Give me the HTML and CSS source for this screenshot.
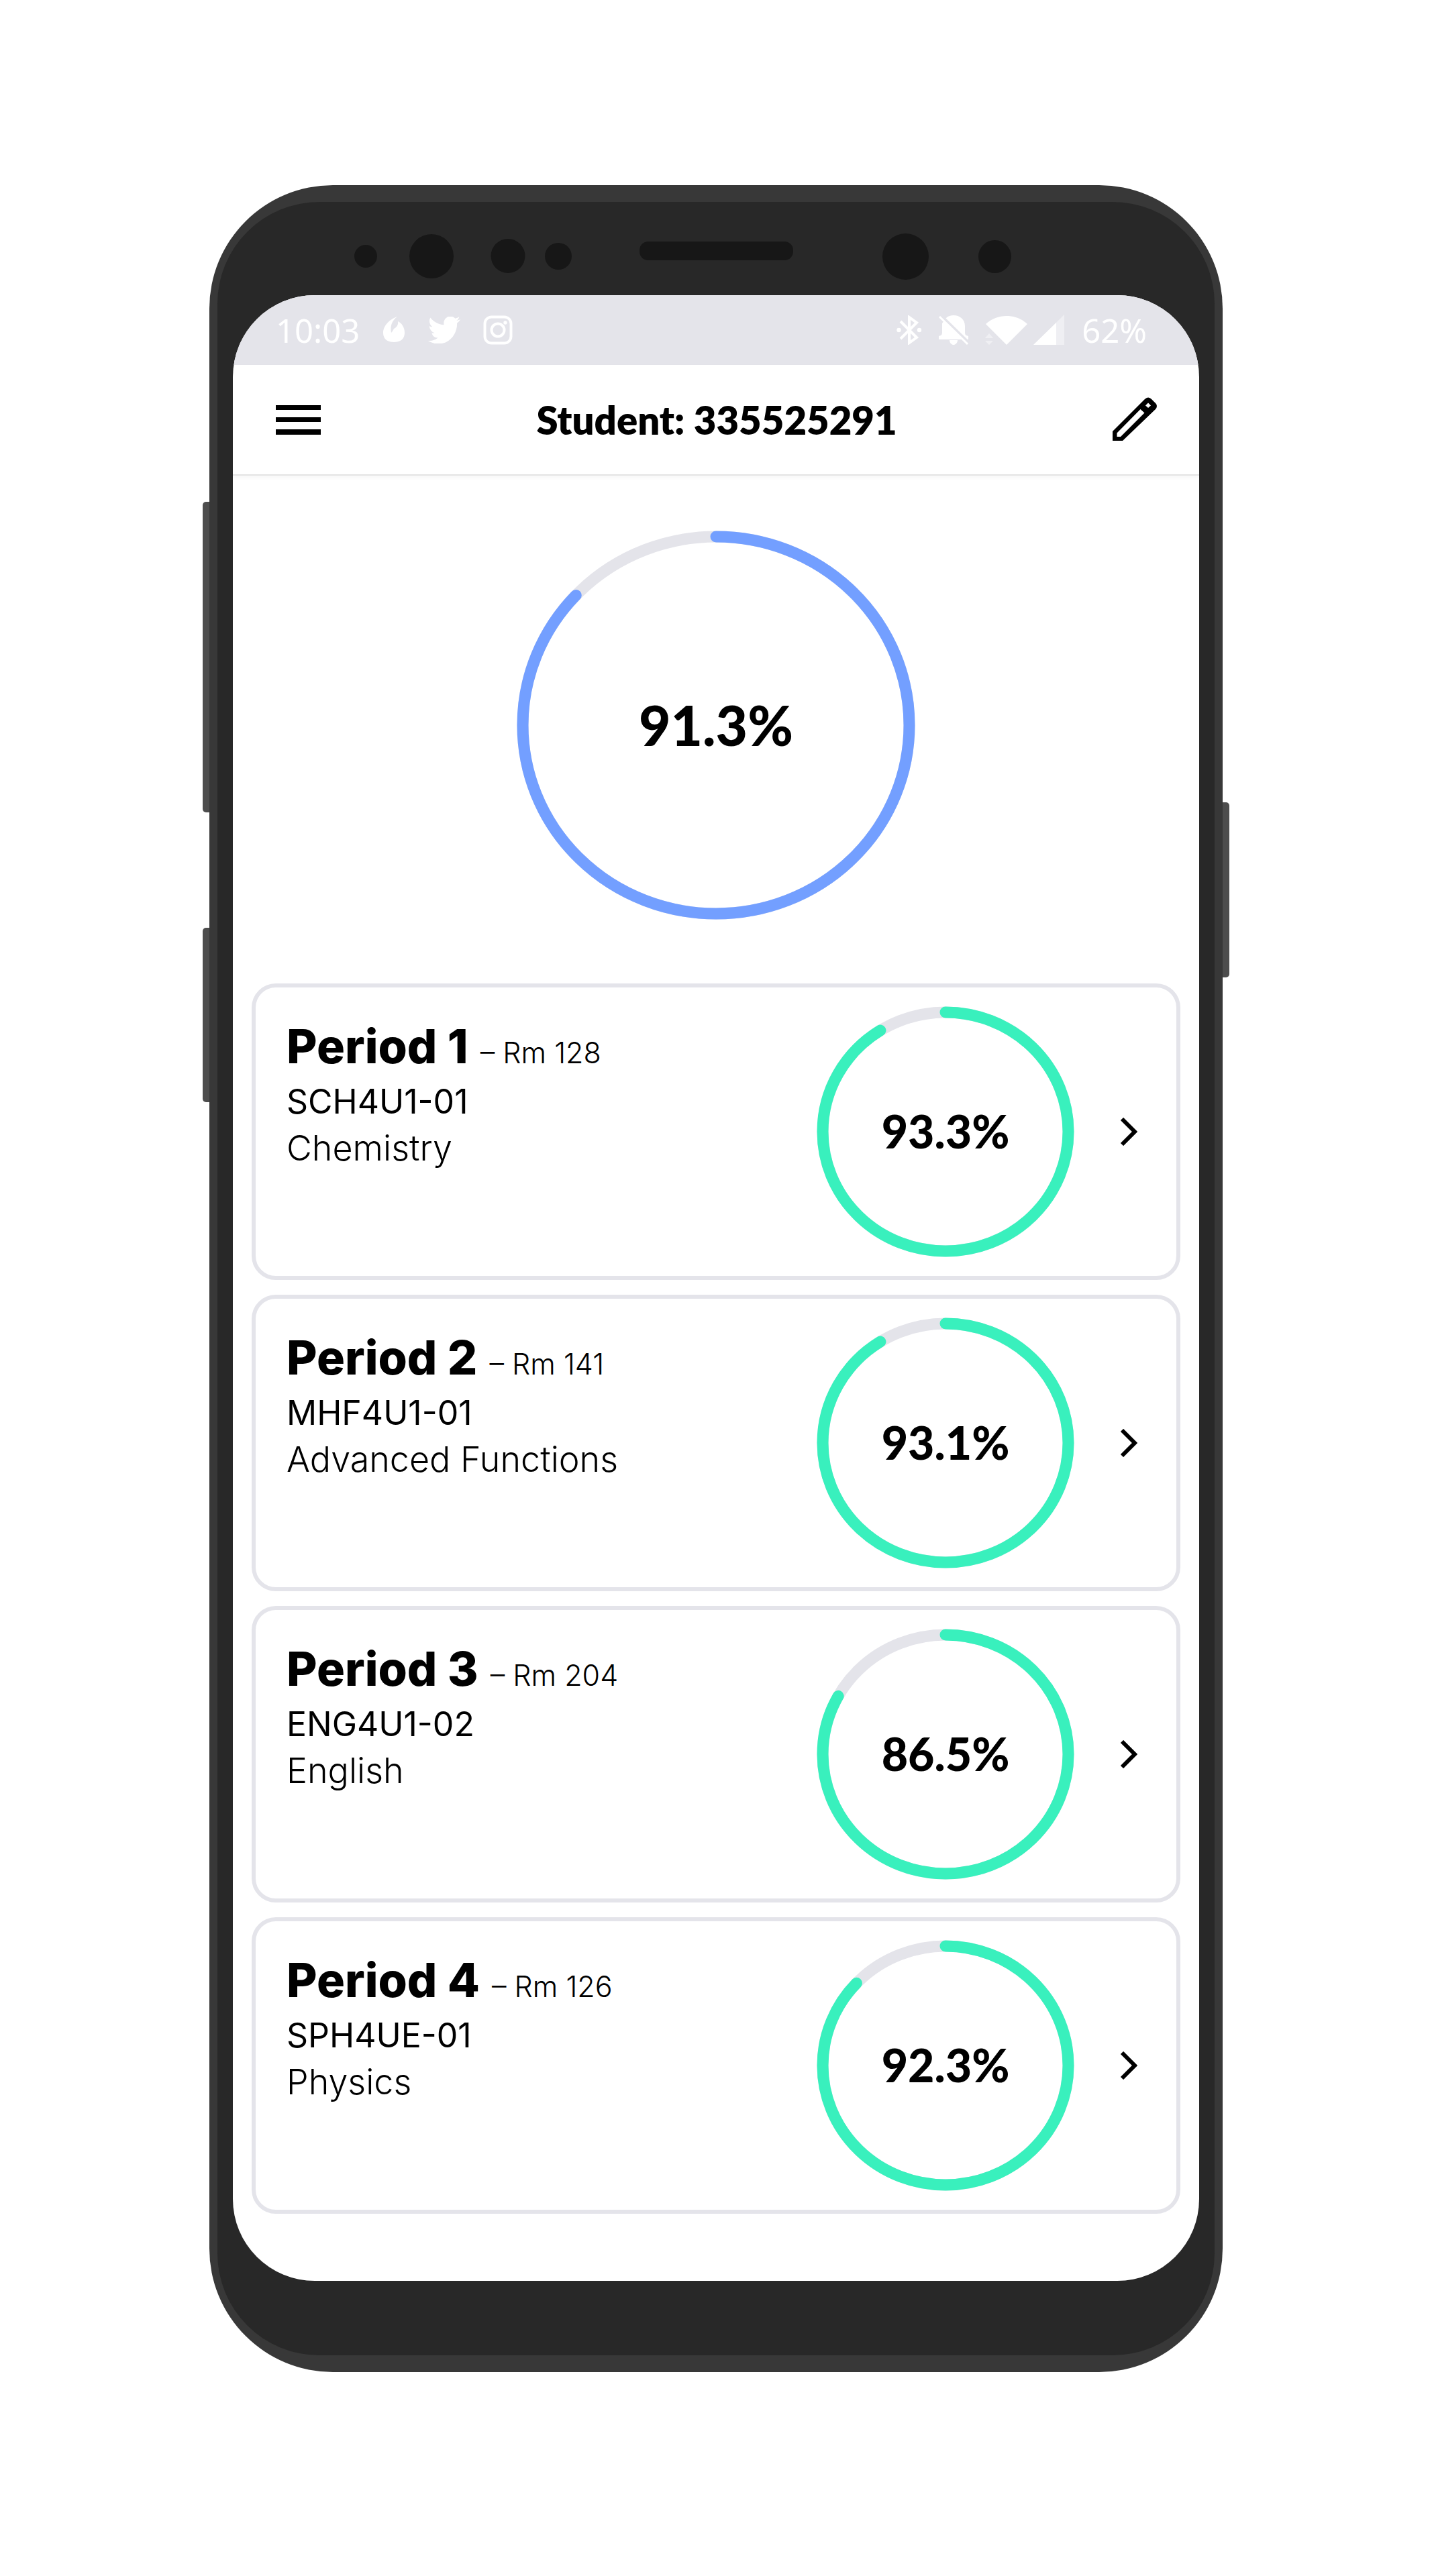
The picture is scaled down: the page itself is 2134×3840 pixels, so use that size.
FILE: index.html
```html
<!DOCTYPE html>
<html lang="en">
<head>
<meta charset="utf-8">
<meta name="viewport" content="width=device-width, initial-scale=1">
<title>Student marks</title>
<link rel="stylesheet" href="styles.css">
</head>
<body>
<div class="phone">
  <span class="side-key volume"></span>
  <span class="side-key assistant"></span>
  <span class="side-key power"></span>
  <div class="body">
    <svg class="sensors" viewBox="0 0 1440 139" aria-hidden="true">
      <circle cx="198" cy="81" r="17"/>
      <circle cx="296" cy="81" r="33"/>
      <circle cx="410" cy="80.500" r="25.500"/>
      <circle cx="485" cy="81" r="20"/>
      <rect x="606" y="59" width="229" height="28" rx="13"/>
      <circle cx="1002.500" cy="81.500" r="34.500"/>
      <circle cx="1135.500" cy="81.500" r="24.500"/>
    </svg>
    <div class="screen">
      <div class="status">
        <div class="status-group">
          <span class="status-text">10:03</span>
          <svg width="34" height="42" viewBox="0 0 34 42" aria-hidden="true"><path fill="#fff" d="M22 1C12 4 1 14 1 25c0 9 6 14 16 14s16-5 16-14c0-8-4-14-10-17 1 5-2 9-6 11-1 2-2 4-4 6-2-10 1-18 9-24z"/></svg>
          <svg width="48" height="40" viewBox="0 2.500 24 19" preserveAspectRatio="none" aria-hidden="true"><path fill="#fff" d="M23.954 4.569a10 10 0 0 1-2.825.775 4.958 4.958 0 0 0 2.163-2.723c-.951.555-2.005.959-3.127 1.184a4.920 4.920 0 0 0-8.384 4.482C7.691 8.094 4.066 6.130 1.640 3.161a4.822 4.822 0 0 0-.666 2.475c0 1.710.87 3.213 2.188 4.096a4.904 4.904 0 0 1-2.228-.616v.061a4.923 4.923 0 0 0 3.946 4.827 4.996 4.996 0 0 1-2.212.085 4.937 4.937 0 0 0 4.604 3.417 9.868 9.868 0 0 1-6.102 2.105c-.39 0-.779-.023-1.170-.067a13.995 13.995 0 0 0 7.557 2.209c9.054 0 13.999-7.496 13.999-13.986 0-.209 0-.42-.015-.63a9.936 9.936 0 0 0 2.460-2.548z"/></svg>
          <svg width="44" height="44" viewBox="0 0 44 44" fill="none" stroke="#fff" stroke-width="4" aria-hidden="true"><rect x="2.500" y="2.500" width="39" height="39" rx="10"/><circle cx="22" cy="22" r="9.500"/><circle cx="33" cy="11" r="2.700" fill="#fff" stroke="none"/></svg>
        </div>
        <div class="status-group status-right">
          <svg width="38" height="44" viewBox="0 0 38 44" fill="none" stroke="#fff" stroke-width="4" aria-hidden="true"><path d="M6 9l24 24-11 8V3l11 8L6 35"/><circle cx="3.500" cy="22" r="3.200" fill="#fff" stroke="none"/><circle cx="34" cy="22" r="3.200" fill="#fff" stroke="none"/></svg>
          <svg width="46" height="44" viewBox="0 0 46 44" aria-hidden="true"><path fill="#fff" d="M12 4C15 1 19 0 23 0c9 0 17 6 17 16v9c0 4 1 5 5 6v5H1v-5c4-1 5-2 5-6V12zM17 37h12c0 4-3 7-6 7s-6-3-6-7z"/><path d="M4 0l42 41" stroke="#e4e4ea" stroke-width="4"/><path d="M2 2l42 41" stroke="#fff" stroke-width="3"/></svg>
          <div class="signals">
            <svg width="64" height="44" viewBox="0 0 64 44" aria-hidden="true"><path fill="#fff" d="M1 13C18-3 46-3 63 13L32 44z"/><path fill="#efeff3" d="M0 34l6-7 6 7zM0 38h12l-6 6z"/></svg>
            <svg width="48" height="46" viewBox="0 0 48 46" aria-hidden="true"><path fill="#efeff3" d="M46 0v45H1z"/><path fill="#fff" d="M34 12v33H0z"/></svg>
          </div>
          <span class="status-text">62%</span>
        </div>
      </div>

      <header class="topbar">
        <button class="icon-button" type="button" aria-label="Menu">
          <svg width="68" height="68" viewBox="0 0 68 68" aria-hidden="true"><path d="M0 12h67v7H0zM0 30h67v7H0zM0 48h67v8H0z"/></svg>
        </button>
        <h1 class="title">Student: 335525291</h1>
        <button class="icon-button" type="button" aria-label="Edit">
          <svg width="68" height="68" viewBox="0 0 68 68" aria-hidden="true"><path fill-rule="evenodd" d="M1 65V51L49 3q5-5 10 0l6 6q4 4 0 9L16 65zM7.500 53.500v5.500h5.500L48.500 23.500 42.500 18zM54 8.500l4 4-4 3.500-4-3.500z"/></svg>
        </button>
      </header>

      <main>
        <section class="overview" aria-label="Overall average">
          <div class="ring ring-large">
            <svg class="ring-art" viewBox="0 0 594 580" width="594" height="580" aria-hidden="true">
              <ellipse class="track" cx="297" cy="290" rx="288" ry="281"/>
              <path class="bar bar-blue" pathLength="100" stroke-dasharray="87 100" d="M297 9A288 281 0 0 1 297 571A288 281 0 0 1 297 9"/>
            </svg>
            <span class="value value-large">91.3%</span>
          </div>
        </section>

        <div class="courses">
          <a class="card" href="#period-1">
            <div class="info">
              <div class="heading"><h2 class="period">Period 1</h2><span class="room">– Rm 128</span></div>
              <p class="code">SCH4U1-01</p>
              <p class="course">Chemistry</p>
            </div>
            <div class="ring">
              <svg class="ring-art" viewBox="0 0 384 374" width="384" height="374" aria-hidden="true">
                <ellipse class="track" cx="192" cy="187" rx="183" ry="178"/>
                <path class="bar" pathLength="100" stroke-dasharray="91 100" d="M192 9A183 178 0 0 1 192 365A183 178 0 0 1 192 9"/>
              </svg>
              <span class="value">93.3%</span>
            </div>
            <svg class="chevron" width="26" height="42" viewBox="0 0 26 42" aria-hidden="true"><path d="M3 2l19 19L3 40"/></svg>
          </a>

          <a class="card" href="#period-2">
            <div class="info">
              <div class="heading"><h2 class="period">Period 2</h2><span class="room">– Rm 141</span></div>
              <p class="code">MHF4U1-01</p>
              <p class="course">Advanced Functions</p>
            </div>
            <div class="ring">
              <svg class="ring-art" viewBox="0 0 384 374" width="384" height="374" aria-hidden="true">
                <ellipse class="track" cx="192" cy="187" rx="183" ry="178"/>
                <path class="bar" pathLength="100" stroke-dasharray="91 100" d="M192 9A183 178 0 0 1 192 365A183 178 0 0 1 192 9"/>
              </svg>
              <span class="value">93.1%</span>
            </div>
            <svg class="chevron" width="26" height="42" viewBox="0 0 26 42" aria-hidden="true"><path d="M3 2l19 19L3 40"/></svg>
          </a>

          <a class="card" href="#period-3">
            <div class="info">
              <div class="heading"><h2 class="period">Period 3</h2><span class="room">– Rm 204</span></div>
              <p class="code">ENG4U1-02</p>
              <p class="course">English</p>
            </div>
            <div class="ring">
              <svg class="ring-art" viewBox="0 0 384 374" width="384" height="374" aria-hidden="true">
                <ellipse class="track" cx="192" cy="187" rx="183" ry="178"/>
                <path class="bar" pathLength="100" stroke-dasharray="83 100" d="M192 9A183 178 0 0 1 192 365A183 178 0 0 1 192 9"/>
              </svg>
              <span class="value">86.5%</span>
            </div>
            <svg class="chevron" width="26" height="42" viewBox="0 0 26 42" aria-hidden="true"><path d="M3 2l19 19L3 40"/></svg>
          </a>

          <a class="card" href="#period-4">
            <div class="info">
              <div class="heading"><h2 class="period">Period 4</h2><span class="room">– Rm 126</span></div>
              <p class="code">SPH4UE-01</p>
              <p class="course">Physics</p>
            </div>
            <div class="ring">
              <svg class="ring-art" viewBox="0 0 384 374" width="384" height="374" aria-hidden="true">
                <ellipse class="track" cx="192" cy="187" rx="183" ry="178"/>
                <path class="bar" pathLength="100" stroke-dasharray="87 100" d="M192 9A183 178 0 0 1 192 365A183 178 0 0 1 192 9"/>
              </svg>
              <span class="value">92.3%</span>
            </div>
            <svg class="chevron" width="26" height="42" viewBox="0 0 26 42" aria-hidden="true"><path d="M3 2l19 19L3 40"/></svg>
          </a>
        </div>
      </main>
    </div>
  </div>
</div>
</body>
</html>
```
FILE: styles.css
```css
* {
  box-sizing: border-box;
}

body {
  margin: 0;
  padding: 276px 16px 304px;
  background: #fff;
  color: #000;
  font-family: Lato, "Liberation Sans", sans-serif;
}

h1, h2, p {
  margin: 0;
}

/* Device shell */
.phone {
  position: relative;
  max-width: 1510px;
  margin: 0 auto;
  padding: 25px 12px;
  border-radius: 184px;
  background: #383838;
}

.body {
  padding: 0 23px 111px;
  border-radius: 152px;
  background: #282828;
}

.sensors {
  display: block;
  width: 100%;
  fill: #171717;
}

.side-key {
  position: absolute;
  width: 10px;
  background: #4d4d4d;
}

.volume {
  top: 472px;
  right: 100%;
  height: 463px;
  border-radius: 5px 0 0 5px;
}

.assistant {
  top: 1107px;
  right: 100%;
  height: 260px;
  border-radius: 5px 0 0 5px;
}

.power {
  top: 920px;
  left: 100%;
  height: 261px;
  border-radius: 0 5px 5px 0;
}

.screen {
  overflow: hidden;
  border-radius: 122px;
  background: #fff;
}

/* System status bar */
.status {
  display: flex;
  align-items: center;
  justify-content: space-between;
  height: 104px;
  padding: 0 78px 0 64px;
  background: #e4e4ea;
}

.status-group {
  display: flex;
  align-items: center;
  gap: 34px;
}

.status-right {
  gap: 24px;
}

.signals {
  display: flex;
  align-items: center;
  gap: 8px;
}

.status-text {
  color: #fff;
  font-family: "Noto Sans", "Open Sans", sans-serif;
  font-size: 49px;
  font-weight: 400;
  line-height: 64px;
}

/* App header */
.topbar {
  display: flex;
  align-items: center;
  justify-content: space-between;
  height: 165px;
  padding: 0 62px 0 64px;
  border-bottom: 2px solid #e4e4e4;
  box-shadow: 0 3px 6px rgba(0, 0, 0, 0.04);
}

.icon-button {
  display: flex;
  padding: 0;
  border: 0;
  background: none;
}

.title {
  font-size: 58px;
  font-weight: 800;
  line-height: 70px;
}

.overview {
  display: flex;
  justify-content: center;
  padding: 82px 0 95px;
}

/* Progress rings */
.ring {
  display: grid;
  flex: none;
  place-items: center;
}

.ring-art,
.value {
  grid-area: 1 / 1;
}

.track,
.bar {
  fill: none;
  stroke-width: 17px;
}

.track {
  stroke: #e4e4ea;
}

.bar {
  stroke: #39f0bd;
  stroke-linecap: round;
}

.bar-blue {
  stroke: #739fff;
}

.value {
  padding-bottom: 2px;
  font-size: 68px;
  font-weight: 900;
  line-height: 80px;
}

.value-large {
  font-size: 82px;
}

/* Course cards */
.courses {
  display: grid;
  gap: 22px;
  padding: 0 28px 100px;
}

.card {
  display: flex;
  align-items: center;
  padding: 28px 58px 28px 46px;
  border: 6px solid #e4e4ea;
  border-radius: 36px;
  color: inherit;
  text-decoration: none;
}

.info {
  flex: 1;
  align-self: flex-start;
  padding-top: 20px;
  font-family: Inter, "Liberation Sans", sans-serif;
}

.heading {
  display: flex;
  align-items: baseline;
  gap: 18px;
  margin-bottom: 8px;
}

.period {
  font-size: 70px;
  font-weight: 800;
  line-height: 80px;
}

.room {
  font-size: 43px;
  font-weight: 300;
}

.code,
.course {
  font-size: 50px;
  line-height: 69px;
}

.course {
  font-size: 52px;
  font-weight: 300;
}

.chevron {
  flex: none;
  margin-left: 68px;
  fill: none;
  stroke: #000;
  stroke-width: 6px;
}
```
